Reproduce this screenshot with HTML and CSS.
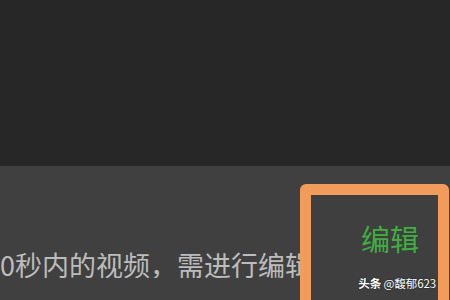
FILE: index.html
```html
<!DOCTYPE html>
<html lang="zh">
<head>
<meta charset="utf-8">
<link rel="stylesheet" href="styles.css">
</head>
<body>
<div class="screen">
  <div class="top"></div>
  <div class="bottom">
    <div class="caption"><span class="caption-text">0秒内的视频，需进行编辑</span></div>
    <div class="edit-box">
      <div class="edit-label">编辑</div>
      <div class="watermark"><b>头条</b> @馥郁623</div>
    </div>
  </div>
</div>
</body>
</html>
```
FILE: styles.css
```css
html, body {
  margin: 0;
  padding: 0;
  background: #272727;
}
.screen {
  width: 450px;
  height: 300px;
  overflow: hidden;
  display: flex;
  flex-direction: column;
  font-family: "Noto Sans CJK SC", "Noto Sans", sans-serif;
}
.top {
  height: 166px;
  flex: none;
  background: #272727;
}
.bottom {
  flex: 1;
  background: #404040;
  display: flex;
  align-items: flex-start;
}
.caption {
  width: 300px;
  flex: none;
  overflow: hidden;
  white-space: nowrap;
  padding-top: 85px;
}
.caption-text {
  display: block;
  font-size: 27px;
  line-height: 27px;
  color: #bcbcbc;
  margin-left: 0;
}
.edit-box {
  margin-top: 18px;
  width: 127px;
  height: 140px;
  flex: none;
  border: 11px solid #f29c5c;
  border-radius: 6px;
  background: #3f3f3f;
  display: flex;
  flex-direction: column;
  align-items: flex-end;
}
.edit-label {
  margin-top: 29px;
  margin-right: 19px;
  font-size: 29px;
  line-height: 29px;
  color: #3fae3f;
}
.watermark {
  margin-top: 23px;
  margin-right: 2px;
  font-size: 11.5px;
  line-height: 14px;
  letter-spacing: -0.1px;
  color: #ffffff;
  text-shadow: 0 0 2px rgba(0,0,0,0.6);
  white-space: nowrap;
}
.watermark b {
  font-weight: 700;
}
```
